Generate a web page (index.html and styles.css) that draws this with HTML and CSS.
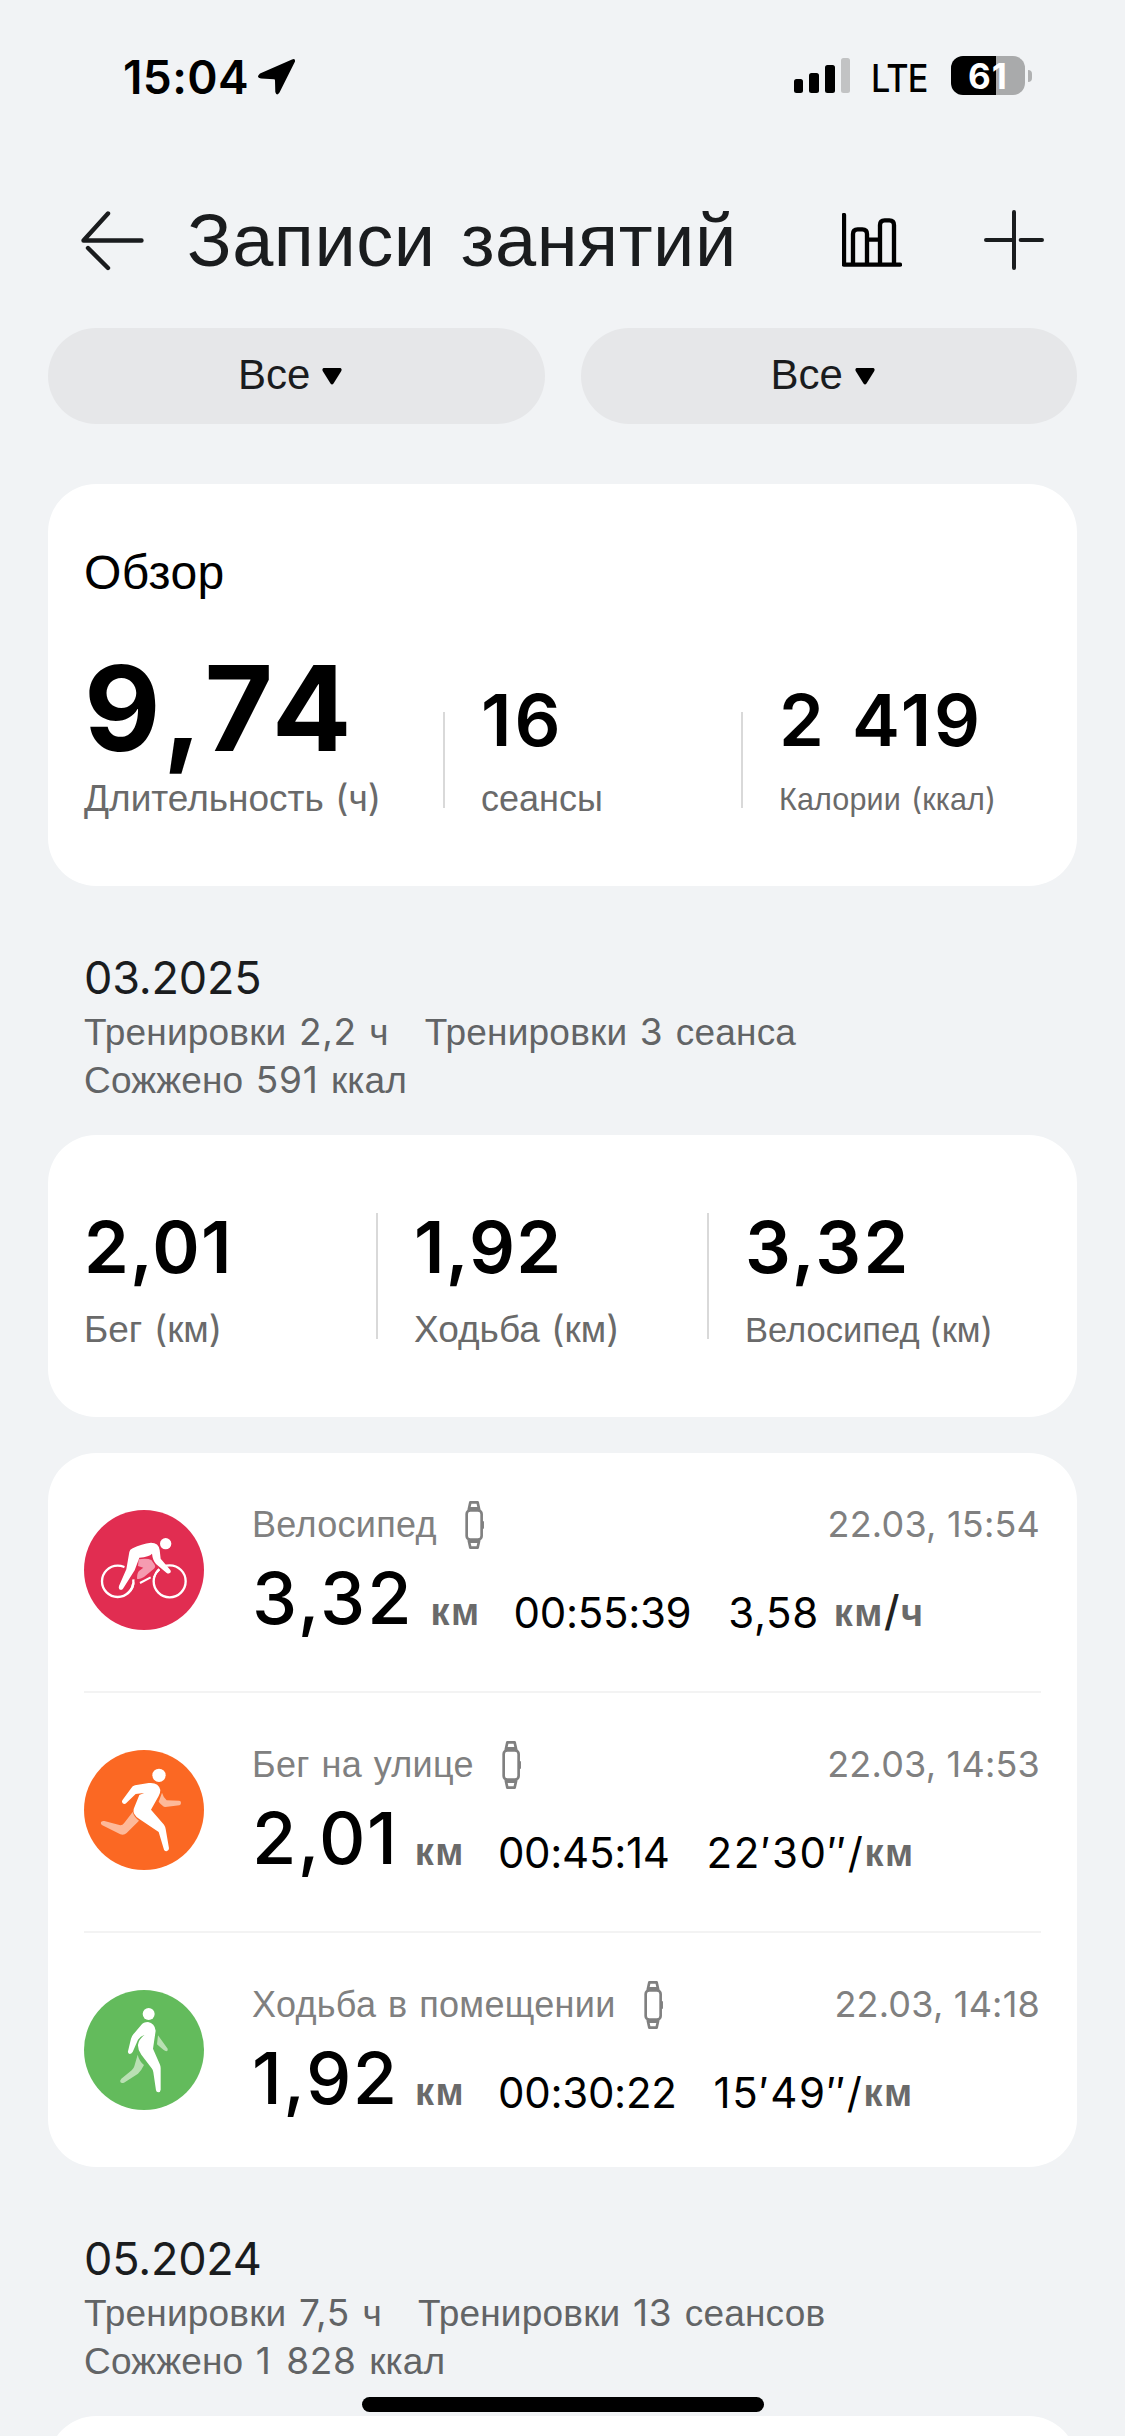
FILE: index.html
```
<!DOCTYPE html>
<html lang="ru">
<head>
<meta charset="utf-8">
<title>Записи занятий</title>
<link rel="stylesheet" href="styles.css">
</head>
<body>
<svg class="defs" aria-hidden="true">
  <symbol id="watch" viewBox="672 30 64 150">
    <g fill="none" stroke="#808080" stroke-width="8" stroke-linejoin="round">
      <rect x="680" y="61" width="45" height="88" rx="11"/>
      <path d="M686 60L691 37H713L718 60M686 150L691 173H713L718 150M690 55H714M690 155H714"/>
      <path d="M729 94V116" stroke-width="6"/>
    </g>
  </symbol>
</svg>
<div class="page">
  <header class="status">
    <span class="time">15:04</span>
    <svg class="location" viewBox="257 58 39 38"><path d="M295 61.500Q295.500 58 292 59.500L260 73.500Q255.500 77.500 261 78.600L274 79.200Q275 79.200 275 80.500L275.300 92Q276.500 96.500 279.500 92.500Z"/></svg>
    <svg class="signal" viewBox="0 0 56 35">
      <rect x="0" y="21" width="9" height="14" rx="2.500"/><rect x="15" y="15" width="10" height="20" rx="2.500"/><rect x="31" y="7" width="10" height="28" rx="2.500"/><rect x="47" y="0" width="9" height="35" rx="2.500" fill="#c2c3c4"/>
    </svg>
    <span class="lte">LTE</span>
    <span class="battery">61</span>
    <span class="nub"></span>
  </header>

  <div class="titlebar">
    <svg class="back" viewBox="80 209 66 64"><path d="M141.500 240.500H83.500L108 213.500M88 248L108 268" fill="none" stroke="#1a1c1e" stroke-width="4.400" stroke-linecap="round" stroke-linejoin="round"/></svg>
    <h1>Записи занятий</h1>
    <svg class="chart" viewBox="189 519 180 162"><g fill="none" stroke="#000" stroke-width="13" stroke-linecap="round" stroke-linejoin="round"><path d="M195 525V674H363M222 670V582Q222 568 236 568H250Q264 568 264 582V670M303 670V555Q303 541 317 541H331Q345 541 345 555V670M264 599H302"/></g></svg>
    <svg class="plus" viewBox="612 510 180 180"><path d="M702 516V684M618 600H700M722 600H786" fill="none" stroke="#1a1c1e" stroke-width="12" stroke-linecap="round"/></svg>
  </div>

  <div class="filters">
    <div class="pill">Все<svg viewBox="0 0 20 17"><path d="M1.500 0H18.500Q20.500 1 19 3.500L11.500 15.500Q10 17.500 8.500 15.500L1 3.500Q-.5 1 1.500 0Z"/></svg></div>
    <div class="pill">Все<svg viewBox="0 0 20 17"><path d="M1.500 0H18.500Q20.500 1 19 3.500L11.500 15.500Q10 17.500 8.500 15.500L1 3.500Q-.5 1 1.500 0Z"/></svg></div>
  </div>

  <section class="card overview">
    <h2>Обзор</h2>
    <div class="stats">
      <div class="stat"><div class="value big">9,74</div><div class="label">Длительность <b>(</b>ч<b>)</b></div></div>
      <div class="stat"><div class="value">16</div><div class="label tight">сеансы</div></div>
      <div class="stat"><div class="value spaced">2 419</div><div class="label small">Калории <b>(</b>ккал<b>)</b></div></div>
    </div>
  </section>

  <div class="month">
    <div class="date">03.2025</div>
    <p><span>Тренировки <b>2,2</b> ч</span><span>Тренировки <b>3</b> сеанса</span></p>
    <p><span>Сожжено <b>591</b> ккал</span></p>
  </div>

  <section class="card totals">
    <div class="stat"><div class="value">2,01</div><div class="label">Бег <b>(</b>км<b>)</b></div></div>
    <div class="stat"><div class="value">1,92</div><div class="label">Ходьба <b>(</b>км<b>)</b></div></div>
    <div class="stat"><div class="value">3,32</div><div class="label medium">Велосипед <b>(</b>км<b>)</b></div></div>
  </section>

  <section class="card list">
    <article class="row">
      <svg class="sport" viewBox="42 60 360 360">
        <circle cx="222" cy="240" r="180" fill="#e12d51"/>
        <g fill="none" stroke="#fff" stroke-width="7"><circle cx="143" cy="274" r="47"/><circle cx="299" cy="274" r="48"/></g>
        <path d="M170 214L262 200L306 250L284 254L262 232L250 262L204 272L182 282L162 306L136 304Z" fill="#e12d51"/>
        <path d="M268 238A48 48 0 0 0 252 262M190 268A47 47 0 0 1 172 311" fill="none" stroke="#fff" stroke-width="7"/>
        <path d="M206 208Q232 204 244 210L254 224Q258 231 251 237L222 261Q208 269 201 266Q201 249 207 243L220 233L204 228Z" fill="#f59bb0"/>
        <path d="M210 279L242 262" stroke="#fff" stroke-width="6"/>
        <g fill="#fff"><circle cx="287" cy="161" r="17"/>
        <path d="M178 186Q179 178 188 175Q215 161 243 158Q266 158 269 180L272 206L301 240Q305 247 298 250Q294 252 290 249L258 222Q248 210 246 191Q238 200 208 203L194 241L159 296Q154 302 148 298Q145 294 147 288L169 238Z"/></g>
      </svg>
      <div class="info">
        <div class="top"><span class="name">Велосипед</span><svg class="watch"><use href="#watch"/></svg><time>22.03, 15:54</time></div>
        <div class="metrics"><span class="dist wide">3,32</span><span class="unit">км</span><span class="dur">00:55:39</span><span class="pace gap">3,58</span><span class="rate"><i>км</i><i class="slash">/</i><i>ч</i></span></div>
      </div>
    </article>
    <article class="row">
      <svg class="sport" viewBox="42 60 360 360">
        <circle cx="222" cy="240" r="180" fill="#fb6823"/>
        <path d="M188 246Q194 264 207 272L170 309Q162 317 151 313L97 286Q90 280 94 275Q97 272 103 273L151 286Q158 286 162 280ZM276 188Q280 202 290 211L328 212Q334 213 333 219Q333 225 328 226L286 231Q278 230 266 215Z" fill="#fdb999"/>
        <g fill="#fff"><circle cx="267" cy="136" r="20"/>
        <path d="M184 174Q187 168 195 166L236 159Q266 156 271 180Q271 190 266 198L243 239L282 284Q286 290 287 297L297 355Q297 363 290 364Q284 364 282 359L266 306L208 267Q187 254 191 237L208 195L222 189L197 192L169 219Q164 224 158 220Q154 216 157 211Z"/></g>
      </svg>
      <div class="info">
        <div class="top"><span class="name">Бег на улице</span><svg class="watch"><use href="#watch"/></svg><time>22.03, 14:53</time></div>
        <div class="metrics"><span class="dist">2,01</span><span class="unit">км</span><span class="dur">00:45:14</span><span class="pace">22′30″/</span><span class="rate"><i>км</i></span></div>
      </div>
    </article>
    <article class="row">
      <svg class="sport" viewBox="42 60 360 360">
        <circle cx="222" cy="240" r="180" fill="#63bb5c"/>
        <path d="M203 254Q208 274 222 285Q214 302 204 311L162 338Q154 341 151 336Q149 331 154 326L185 301Q191 296 193 289ZM264 196L293 236Q295 242 289 244Q285 245 261 223Z" fill="#b9e0b3"/>
        <g fill="#fff"><circle cx="236" cy="132" r="18"/>
        <path d="M213 166Q220 156 234 156Q254 159 257 182L249 236L270 284Q272 289 272 295V359Q271 367 265 367Q259 367 258 361L250 307Q249 300 245 295L214 254Q203 240 204 224Q206 208 224 194Q211 198 204 209L188 246Q184 252 179 252Q173 250 174 244L183 206Q185 199 190 193Z"/></g>
      </svg>
      <div class="info">
        <div class="top"><span class="name">Ходьба в помещении</span><svg class="watch"><use href="#watch"/></svg><time>22.03, 14:18</time></div>
        <div class="metrics"><span class="dist">1,92</span><span class="unit">км</span><span class="dur">00:30:22</span><span class="pace">15′49″/</span><span class="rate"><i>км</i></span></div>
      </div>
    </article>
  </section>

  <div class="month">
    <div class="date">05.2024</div>
    <p><span>Тренировки <b>7,5</b> ч</span><span>Тренировки <b>13</b> сеансов</span></p>
    <p><span>Сожжено <b>1 828</b> ккал</span></p>
  </div>
  <section class="card next"></section>
  <div class="home"></div>
</div>
</body>
</html>
```
FILE: styles.css
```
* { box-sizing: border-box; margin: 0; padding: 0; }
body { background: #f1f3f5; font-family: "Liberation Sans", sans-serif; color: #000; }
svg { display: block; flex: none; }
.defs { position: absolute; width: 0; height: 0; }
.page { position: relative; width: 1125px; height: 2436px; overflow: hidden; white-space: nowrap; }

/* Digits and brackets use a different face from the Cyrillic text */
b { font-family: Inter, sans-serif; font-weight: 400; line-height: 0; }

.status { display: flex; align-items: center; height: 154px; padding-left: 123px; }
.time { width: 134px; font: 600 46px/50px Inter, sans-serif; letter-spacing: .4px; }
.location { width: 39px; height: 38px; }
.signal { width: 56px; height: 35px; margin: 0 0 3px 498px; }
.lte { width: 53px; margin-left: 21px; padding-top: 2px; font: 500 38px/44px Inter, sans-serif; letter-spacing: -1px; transform: scaleX(.9); transform-origin: left; }
.battery { width: 74px; height: 39px; margin: 0 0 3px 27px; border-radius: 12px; background: linear-gradient(90deg, #000 45px, #a9aaab 45px); color: #fff; font: 700 35px/40px Inter, sans-serif; letter-spacing: 1px; text-align: center; }
.nub { width: 4px; height: 12px; margin: 0 0 2px 3px; border-radius: 0 4px 4px 0; background: #b0b1b2; }

.titlebar { display: flex; align-items: center; height: 174px; padding-left: 80px; }
.back { width: 66px; height: 64px; }
h1 { width: 654px; margin-left: 41px; font-size: 74px; font-weight: 400; line-height: 90px; letter-spacing: .5px; word-spacing: 4px; color: #1a1c1e; }
.chart { width: 60px; height: 54px; margin: 0 0 2px 1px; }
.plus { width: 60px; height: 60px; margin: 0 0 2px 82px; }

.filters { display: grid; grid-template-columns: 1fr 1fr; gap: 36px; padding: 0 48px; }
.pill { display: flex; align-items: center; justify-content: center; height: 96px; padding: 0 12px 3px 0; border-radius: 48px; background: #e6e7e9; color: #1a1c1e; font-size: 42px; }
.pill svg { width: 20px; height: 17px; margin: 3px 0 0 12px; }

.card { margin: 0 48px; border-radius: 48px; background: #fff; }
.overview { height: 402px; margin-top: 60px; padding: 61px 36px 0; }
h2 { font-size: 48px; font-weight: 400; line-height: 56px; letter-spacing: .4px; }
.stats { display: grid; grid-template-columns: 359px 298px 1fr; align-items: end; margin-top: 37px; }
.stat + .stat { padding-left: 38px; background: linear-gradient(#d9d9d9, #d9d9d9) no-repeat left 0 bottom 12px / 2px 96px; }
.value { font: 600 72px/116px Inter, sans-serif; letter-spacing: 3px; }
.value.big { font-size: 118px; font-weight: 700; line-height: 140px; letter-spacing: 5.5px; }
.value.spaced { word-spacing: 4px; }
.label { color: #6a6a6a; font-size: 37px; line-height: 42px; letter-spacing: 0; word-spacing: 1px; }
.label.small { font-size: 30.5px; letter-spacing: .15px; word-spacing: 1.5px; }
.label.medium { font-size: 34.5px; letter-spacing: 0; word-spacing: 0; }
.label.tight { font-size: 36px; }

.month { height: 249px; padding: 64px 84px 0; }
.month .date { margin-bottom: 3px; font: 400 45px/56px Inter, sans-serif; letter-spacing: -.2px; color: #1a1c1e; }
.month p { display: flex; gap: 36px; color: #626466; font-size: 37px; line-height: 48px; letter-spacing: .2px; word-spacing: 2px; }
.month b { letter-spacing: .7px; word-spacing: 3.5px; }

.totals { display: grid; grid-template-columns: 292px 331px 1fr; height: 282px; padding: 72px 36px 0; }
.totals .value { margin-bottom: 22px; line-height: 80px; letter-spacing: 1.2px; }
.totals .stat:last-child .value { letter-spacing: 2.4px; }
.totals .stat + .stat { background-position: left 0 top 6px; background-size: 2px 126px; }

.list { height: 714px; margin-top: 36px; padding: 0 36px; }
.row { display: flex; height: 240px; border-bottom: 2px solid #f3f3f3; }
.row:last-child { border: 0; }
.sport { width: 120px; height: 120px; margin-top: 57px; }
.info { flex: 1; margin-left: 48px; padding-top: 48px; }
.top { display: flex; align-items: center; height: 48px; color: #808080; font-size: 36px; }
.name { letter-spacing: .3px; word-spacing: 1.5px; }
.watch { width: 21.3px; height: 50px; margin-left: 27px; }
time { margin: 0 1px 2px auto; font-family: Inter, sans-serif; letter-spacing: .2px; }
.metrics { display: flex; align-items: flex-end; height: 80px; margin-top: 9px; line-height: 52px; }
.dist { font: 500 72px/80px Inter, sans-serif; letter-spacing: 1.4px; }
.dist.wide { letter-spacing: 2.2px; }
.unit, .rate { color: #6a6a6a; font-size: 38px; font-weight: 700; letter-spacing: 1.5px; }
.unit { margin-left: 16.5px; }
.dur, .pace { font-family: Inter, sans-serif; font-size: 42px; letter-spacing: -.3px; }
.dur, .pace, .rate { margin-bottom: -1px; }
.dur { margin-left: 33px; }
.pace { margin-left: 37px; letter-spacing: 1.6px; }
.pace.gap { margin-right: 15px; letter-spacing: .6px; }
i { font-style: normal; }
.slash { color: #222; font-family: Inter, sans-serif; font-weight: 500; font-size: 42px; line-height: 0; }

.next { height: 120px; }
.home { position: absolute; left: 362px; top: 2397px; width: 402px; height: 15px; border-radius: 8px; background: #000; }
```
